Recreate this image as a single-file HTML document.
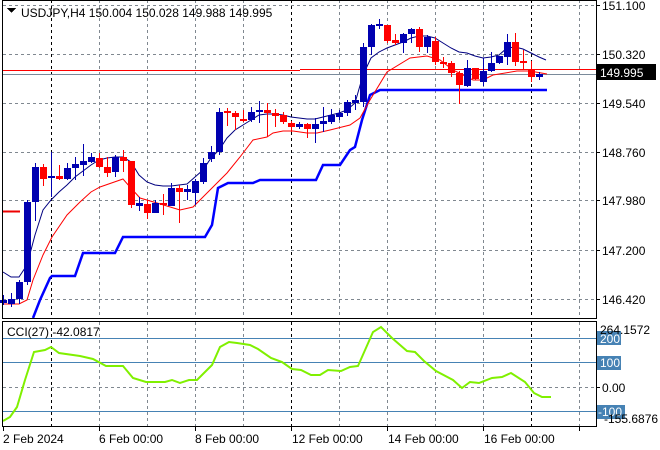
<!DOCTYPE html>
<html><head><meta charset="utf-8"><style>
html,body{margin:0;padding:0;background:#fff;width:660px;height:450px;overflow:hidden}
svg{display:block}
text{font-family:"Liberation Sans",sans-serif;font-size:12px;fill:#000}
</style></head><body>
<svg width="660" height="450" viewBox="0 0 660 450" xmlns="http://www.w3.org/2000/svg" shape-rendering="crispEdges">
<rect width="660" height="450" fill="#fff"/>
<g stroke="#808890" stroke-dasharray="3,3" stroke-width="1">
<line x1="3" y1="5.5" x2="596" y2="5.5"/>
<line x1="3" y1="54.5" x2="596" y2="54.5"/>
<line x1="3" y1="103.5" x2="596" y2="103.5"/>
<line x1="3" y1="152.5" x2="596" y2="152.5"/>
<line x1="3" y1="200.5" x2="596" y2="200.5"/>
<line x1="3" y1="250.5" x2="596" y2="250.5"/>
<line x1="3" y1="299.5" x2="596" y2="299.5"/>
<line x1="3" y1="387.5" x2="596" y2="387.5"/>
</g>
<g stroke="#808890" stroke-dasharray="3,3">
<path d="M99.5 0V318M147.5 0V318M195.5 0V318M243.5 0V318M339.5 0V318M387.5 0V318M435.5 0V318M483.5 0V318M579.5 0V318"/>
<path d="M99.5 322V426M147.5 322V426M195.5 322V426M243.5 322V426M339.5 322V426M387.5 322V426M435.5 322V426M483.5 322V426M579.5 322V426"/>
</g>
<g stroke="#000" stroke-dasharray="3,3">
<path d="M51.5 0V318M291.5 0V318M531.5 0V318M51.5 322V426M291.5 322V426M531.5 322V426"/>
</g>
<line x1="3" y1="70.5" x2="300" y2="70.5" stroke="#f00"/>
<line x1="300" y1="69.5" x2="596" y2="69.5" stroke="#f00"/>
<line x1="3" y1="74.5" x2="596" y2="74.5" stroke="#7a8a9a"/>
<line x1="3" y1="211.5" x2="20" y2="211.5" stroke="#e00" stroke-width="2"/>

<g shape-rendering="auto" fill="none">
<polyline stroke="#0000ff" stroke-width="2.5" points="33,318 40,300 50,278 52,276 75,276 83,253 115,253 123,237 205,237 212,225 218,188 228,183 253,183 260,180 316,180 323,165 340,165 350,150 355,147 362,120 370,95 380,90 547,90"/>
<polyline stroke="#000080" stroke-width="1" points="3,272 11,277 19,277 27,265 35,235 43,210 51,200 59,192 67,185 75,177 83,171 91,165 99,160 107,158 115,157 123,157 131,162 139,175 147,182 155,185 163,186 171,186 179,185 187,184 195,177 203,170 211,158 219,150 227,138 235,130 243,125 251,120 259,115 267,114 275,114 283,115 291,117 299,118 307,119 315,119 323,117 331,115 339,113 347,110 355,103 363,75 371,58 379,52 387,48 395,45 403,42 411,38 419,36 427,36 435,38 443,43 451,48 459,52 467,53 475,56 483,58 491,57 499,55 507,48 515,47 523,49 531,53 539,57 546,60"/>
<polyline stroke="#ff0000" stroke-width="1" points="3,304 19,304 27,300 33,280 43,255 52,237 67,215 80,202 91,192 100,187 123,179 130,187 140,198 157,203 180,210 193,207 207,193 227,173 240,157 253,140 267,137 273,133 283,131 293,131 307,133 317,133 330,130 350,125 360,118 370,100 387,72 410,58 427,56 440,60 453,70 473,80 483,80 493,75 517,71 530,71 547,74"/>
</g>

<!-- blue candles -->
<g fill="#0000b0" stroke="none">
<path stroke="#0000b0" fill="none" d="M3.5 295V305M11.5 293V307M19.5 280V304M27.5 200V285M35.5 163V221M51.5 152V197M67.5 163V180M75.5 157V180M83.5 144V176M91.5 153V163M115.5 155V177M139.5 197V211M155.5 200V213M171.5 183V206M187.5 185V200M195.5 179V205M203.5 158V184M211.5 146V162M219.5 108V155M251.5 107V122M259.5 101V123M299.5 122V129M315.5 118V143M323.5 107V132M331.5 109V124M339.5 110V120M347.5 100V116M355.5 95V110M363.5 43V107M371.5 24V55M379.5 19V29M403.5 33V53M411.5 28V43M427.5 35V53M467.5 60V87M483.5 58V86M491.5 52V72M499.5 56V64M507.5 34V65M539.5 72V80"/>
<rect x="0" y="300" width="7" height="3"/>
<rect x="8" y="299" width="7" height="5"/>
<rect x="16" y="282" width="7" height="17"/>
<rect x="24" y="202" width="7" height="80"/>
<rect x="32" y="167" width="7" height="35"/>
<rect x="48" y="176" width="7" height="2"/>
<rect x="64" y="168" width="7" height="11"/>
<rect x="72" y="164" width="7" height="4"/>
<rect x="80" y="161" width="7" height="4"/>
<rect x="88" y="157" width="7" height="5"/>
<rect x="112" y="157" width="7" height="15"/>
<rect x="136" y="203" width="7" height="3"/>
<rect x="152" y="203" width="7" height="10"/>
<rect x="168" y="188" width="7" height="18"/>
<rect x="184" y="189" width="7" height="3"/>
<rect x="192" y="181" width="7" height="12"/>
<rect x="200" y="163" width="7" height="19"/>
<rect x="208" y="152" width="7" height="7"/>
<rect x="216" y="112" width="7" height="40"/>
<rect x="248" y="112" width="7" height="8"/>
<rect x="256" y="110" width="7" height="2"/>
<rect x="296" y="124" width="7" height="3"/>
<rect x="312" y="124" width="7" height="5"/>
<rect x="320" y="121" width="7" height="3"/>
<rect x="328" y="115" width="7" height="7"/>
<rect x="336" y="113" width="7" height="4"/>
<rect x="344" y="102" width="7" height="11"/>
<rect x="352" y="100" width="7" height="3"/>
<rect x="360" y="47" width="7" height="55"/>
<rect x="368" y="25" width="7" height="22"/>
<rect x="376" y="24" width="7" height="2"/>
<rect x="400" y="34" width="7" height="9"/>
<rect x="408" y="29" width="7" height="5"/>
<rect x="424" y="37" width="7" height="10"/>
<rect x="464" y="68" width="7" height="18"/>
<rect x="480" y="71" width="7" height="11"/>
<rect x="488" y="63" width="7" height="8"/>
<rect x="496" y="56" width="7" height="7"/>
<rect x="504" y="42" width="7" height="15"/>
<rect x="536" y="74" width="7" height="3"/>
</g>
<!-- red candles -->
<g fill="#ff0000" stroke="none">
<path stroke="#ff0000" fill="none" d="M43.5 164V186M59.5 165V180M99.5 153V168M107.5 157V177M123.5 150V172M131.5 161V208M147.5 200V219M163.5 194V215M179.5 185V223M227.5 108V126M235.5 111V130M243.5 110V122M267.5 103V137M275.5 109V127M283.5 112V124M291.5 121V132M307.5 123V138M387.5 25V43M395.5 34V45M419.5 27V52M435.5 37V65M443.5 57V68M451.5 61V77M459.5 71V104M475.5 68V80M515.5 33V66M523.5 50V70M531.5 61V82"/>
<rect x="40" y="167" width="7" height="12"/>
<rect x="56" y="176" width="7" height="3"/>
<rect x="96" y="158" width="7" height="9"/>
<rect x="104" y="167" width="7" height="6"/>
<rect x="120" y="157" width="7" height="4"/>
<rect x="128" y="161" width="7" height="44"/>
<rect x="144" y="204" width="7" height="9"/>
<rect x="160" y="203" width="7" height="2"/>
<rect x="176" y="188" width="7" height="4"/>
<rect x="224" y="111" width="7" height="2"/>
<rect x="232" y="113" width="7" height="4"/>
<rect x="240" y="119" width="7" height="2"/>
<rect x="264" y="110" width="7" height="3"/>
<rect x="272" y="113" width="7" height="3"/>
<rect x="280" y="115" width="7" height="7"/>
<rect x="288" y="123" width="7" height="4"/>
<rect x="304" y="124" width="7" height="5"/>
<rect x="384" y="25" width="7" height="16"/>
<rect x="392" y="40" width="7" height="3"/>
<rect x="416" y="29" width="7" height="18"/>
<rect x="432" y="41" width="7" height="21"/>
<rect x="440" y="62" width="7" height="2"/>
<rect x="448" y="63" width="7" height="10"/>
<rect x="456" y="73" width="7" height="12"/>
<rect x="472" y="68" width="7" height="11"/>
<rect x="512" y="42" width="7" height="20"/>
<rect x="520" y="61" width="7" height="2"/>
<rect x="528" y="69" width="7" height="8"/>
</g>

<g stroke="#4682b4">
<line x1="3" y1="338.5" x2="596" y2="338.5"/>
<line x1="3" y1="362.5" x2="596" y2="362.5"/>
<line x1="3" y1="411.5" x2="596" y2="411.5"/>
</g>
<polyline shape-rendering="auto" fill="none" stroke="#80f000" stroke-width="2" points="3,421 10,417 17,407 25,380 34,352 45,350 51,347 59,353 80,356 93,359 106,366 123,366 133,378 146,382 165,382 172,380 180,383 189,380 197,380 212,365 220,347 229,342 237,343 250,345 258,349 271,358 282,362 292,369 301,370 311,375 320,375 328,370 341,371 350,367 358,366 373,332 381,327 392,338 407,351 415,352 424,361 436,371 453,380 462,388 470,382 479,383 492,378 502,377 511,373 525,382 534,393 542,397 551,397"/>

<g fill="none" stroke="#000">
<rect x="2.5" y="0.5" width="594" height="318"/>
<rect x="2.5" y="321.5" width="594" height="105"/>
</g>
<g stroke="#000">
<path d="M596 5.5h4M596 54.5h4M596 103.5h4M596 152.5h4M596 200.5h4M596 250.5h4M596 299.5h4M596 387.5h4"/>
<path d="M3.5 427v4M99.5 427v4M195.5 427v4M291.5 427v4M387.5 427v4M483.5 427v4M579.5 427v4"/>
</g>

<path d="M7 8h9l-4.5 5z" fill="#000"/>
<text x="21" y="17">USDJPY,H4  150.004 150.028 149.988 149.995</text>
<text x="7" y="336">CCI(27) -42.0817</text>

<text x="602" y="10">151.100</text>
<text x="602" y="59">150.320</text>
<rect x="596" y="64" width="60" height="16" fill="#000"/>
<text x="600" y="77" style="fill:#fff">149.995</text>
<text x="602" y="108">149.540</text>
<text x="602" y="157">148.760</text>
<text x="602" y="205">147.980</text>
<text x="602" y="255">147.200</text>
<text x="602" y="304">146.420</text>

<rect x="597" y="331" width="24" height="14" fill="#4682b4"/>
<rect x="597" y="356" width="24" height="14" fill="#4682b4"/>
<rect x="597" y="405" width="28" height="14" fill="#4682b4"/>
<text x="600" y="343" style="fill:#fff">200</text>
<text x="600" y="367" style="fill:#fff">100</text>
<text x="598" y="416" style="fill:#fff">-100</text>
<text x="600" y="334">264.1572</text>
<text x="602" y="392">0.00</text>
<text x="604" y="423">-155.6876</text>

<text x="3" y="443">2 Feb 2024</text>
<text x="99" y="443">6 Feb 00:00</text>
<text x="195" y="443">8 Feb 00:00</text>
<text x="292" y="443">12 Feb 00:00</text>
<text x="388" y="443">14 Feb 00:00</text>
<text x="484" y="443">16 Feb 00:00</text>
</svg>
</body></html>
